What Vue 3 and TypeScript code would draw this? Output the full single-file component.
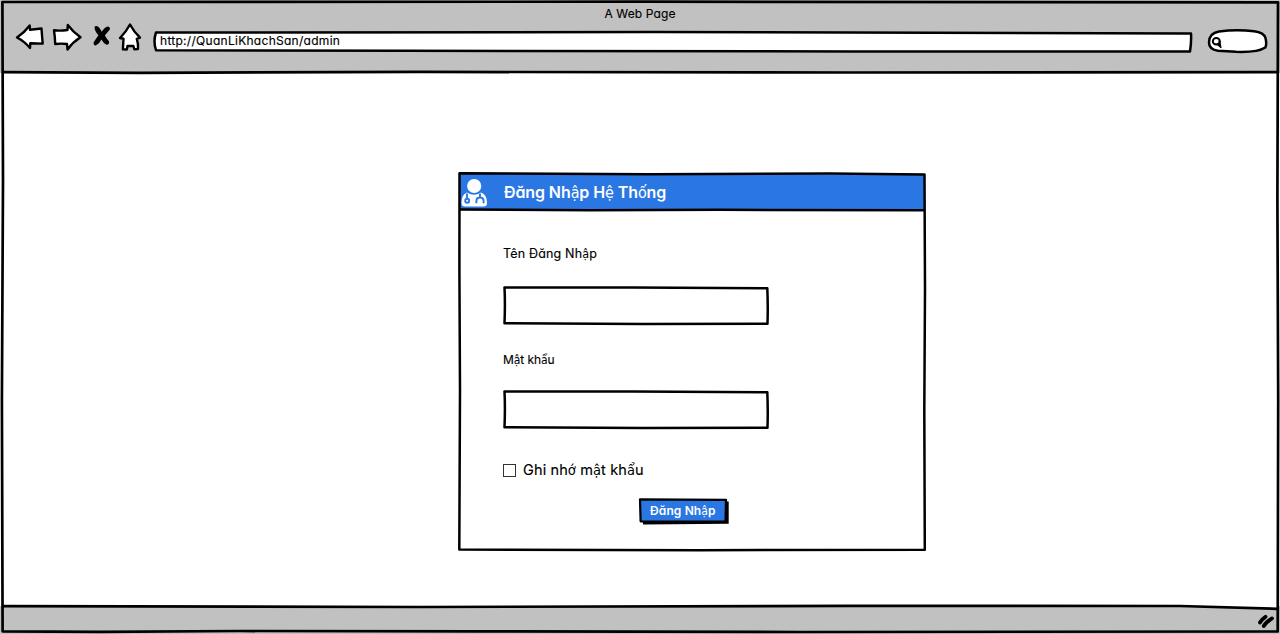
<script setup lang="ts">
import { ref } from 'vue'

interface Run { text: string; alt?: boolean }

// Splits text so that stacked Vietnamese vowels take the fallback face.
function runs(text: string): Run[] {
  return text
    .split(/([ậệốớẩ])/)
    .filter((part) => part.length > 0)
    .map((part) => ({ text: part, alt: /^[ậệốớẩ]$/.test(part) }))
}

const heading = runs('Đăng Nhập Hệ Thống')
const remember = runs('Ghi nhớ mật khẩu')
const submit = runs('Đăng Nhập')
const fields = [
  { id: 'user', type: 'text', label: runs('Tên Đăng Nhập') },
  { id: 'password', type: 'password', label: runs('Mật khẩu') },
]
const values = ref<string[]>(['', ''])
const checked = ref(false)
</script>

<template>
  <div class="browser">
    <header class="toolbar">
      <div class="page-title"><span class="t-title">A Web Page</span></div>
      <div class="controls">
        <svg class="nav" width="138" height="34" viewBox="10 20 138 34">
          <g fill="#fff" stroke="#000" stroke-width="2.4" stroke-linejoin="round">
            <path d="M17 37.5 Q24 33 29.7 25.5 L30 29.8 L41.5 28.5 Q42 36 42.7 43.6 L30.3 43.3 L30 48 Q24 41 17 37.5Z" />
            <path d="M54 30.3 Q60 31 67.5 30 L67.8 25 Q73 32 80.5 37.3 Q73 42 67.5 49.5 L67 44 Q61 43.2 55.2 44 Q55 37 54 30.3Z" />
            <path d="M130 24.5 Q134 32 140 37.7 L136.8 38.8 Q138.5 44 138 49 L134.3 49.3 L133.4 46 L127.5 46 L126.8 49.5 L122.9 49.2 L123.5 38.7 L120 38 Q126 32 130 24.5Z" />
          </g>
          <path d="M94.6 26.6 Q97 25 99.5 28 L101.8 31.8 Q104 27.5 107.5 26.4 Q110.6 26.8 109.8 29.5 L104.8 35.5 Q106.8 39 109 41.2 Q109.5 44.8 106.5 44.8 Q103.5 43.5 101.4 39.6 Q99.5 44 95.8 45.6 Q93 45.5 93.8 42 L98.4 35.3 Q94.3 31 94.6 26.6Z" fill="#000" />
        </svg>
        <div class="address">
          <svg class="sketch" viewBox="0 0 1040 24">
            <path d="M3 2.5 L500 2 L1038 3.5 Q1038.5 12 1037 21.5 L700 21.5 L250 20.7 L3 20.2 Q0 11 3 2.5Z" fill="#fff" stroke="#000" stroke-width="2.5" stroke-linejoin="round" />
          </svg>
          <span class="t-url">http://QuanLiKhachSan/admin</span>
        </div>
        <svg class="search" width="62" height="26" viewBox="1206 28 62 26">
          <path d="M1209 42.5 Q1209 33 1219 31.4 Q1237 29 1254 31.3 Q1264 32.5 1265.5 38 Q1267 45 1265.3 47.5 Q1258 52.5 1236 51.8 L1218 50.7 Q1209 49.5 1209 42.5Z" fill="#fff" stroke="#000" stroke-width="2.5" />
          <ellipse cx="1216.3" cy="41.3" rx="3.5" ry="3.3" fill="none" stroke="#000" stroke-width="2" />
          <path d="M1217.3 44 L1220.8 47.2 M1219.5 41.5 L1220.3 45.5" fill="none" stroke="#000" stroke-width="1.8" stroke-linecap="round" />
        </svg>
      </div>
    </header>

    <main class="viewport">
      <form class="dialog" @submit.prevent>
        <svg class="sketch" viewBox="458 172 468 380">
          <path d="M459.5 173.5 L924.5 174.5 L924.5 210 L459.5 210Z" fill="#2a77e4" />
          <g fill="none" stroke="#000" stroke-width="2.5" stroke-linejoin="round">
            <path d="M459.5 173.3 L650 174.2 L830 173.6 L924.5 174.4 L925 290 L924.3 410 L924.8 549.8 L700 550.2 L459.3 549.5 L460 390 L459.4 270Z" />
            <path d="M459.5 209.5 L590 210.3 L720 209.8 L924.5 210.2" />
          </g>
        </svg>
        <div class="dialog-head">
          <svg class="avatar" width="28" height="30" viewBox="461 178 28 30">
            <circle cx="474.2" cy="186" r="7.1" fill="#fff" />
            <path d="M467 192.5 Q474 197 481 192.5 Q487 194.5 487 203 Q487 206.5 483.5 206.5 H465 Q461.5 206.5 461.5 203 Q461.5 194.5 467 192.5Z" fill="#fff" />
            <path d="M467 193.5 V198.5 M480 193.5 V197 M476.4 203.2 V201 Q476.5 197.5 480 197.5 Q483.5 197.5 483.6 201 V203.2" fill="none" stroke="#2a77e4" stroke-width="1.9" />
            <circle cx="467.2" cy="200.7" r="2" fill="#fff" stroke="#2a77e4" stroke-width="1.9" />
          </svg>
          <h1 class="t-heading"><span v-for="(r, i) in heading" :key="i" :class="{ alt: r.alt }">{{ r.text }}</span></h1>
        </div>
        <div class="dialog-body">
          <div v-for="(f, n) in fields" :key="f.id" class="field">
            <label :for="f.id" :class="['t-label', f.id]"><span v-for="(r, i) in f.label" :key="i" :class="{ alt: r.alt }">{{ r.text }}</span></label>
            <div class="box">
              <svg class="sketch" viewBox="0 0 266 39">
                <path d="M1.5 1.4 L130 1.5 L264.3 2.2 Q265.1 20 264.5 37.7 L140 38 L1.5 37.3 Q2.3 18 1.5 1.4Z" fill="#fff" stroke="#000" stroke-width="2.5" stroke-linejoin="round" />
              </svg>
              <input :id="f.id" v-model="values[n]" :type="f.type" />
            </div>
          </div>
          <label class="remember">
            <input v-model="checked" type="checkbox" />
            <span class="t-remember"><span v-for="(r, i) in remember" :key="i" :class="{ alt: r.alt }">{{ r.text }}</span></span>
          </label>
          <button class="submit" type="submit">
            <svg class="sketch" viewBox="638 498 92 27">
              <path d="M643 502 L728.7 501.5 L728.7 523.7 L643 524.5Z" fill="#000" />
              <path d="M640 499.4 L726 499.8 L725.5 521.5 L640.6 521.3Z" fill="#2a77e4" stroke="#000" stroke-width="2.2" stroke-linejoin="round" />
            </svg>
            <span class="t-submit"><span v-for="(r, i) in submit" :key="i" :class="{ alt: r.alt }">{{ r.text }}</span></span>
          </button>
        </div>
      </form>
    </main>

    <footer class="status">
      <svg width="20" height="18" viewBox="1256 612 20 18">
        <path d="M1260 622.5 Q1262 619 1265.5 616.8 M1263.8 626 Q1266 622 1272 618.4" fill="none" stroke="#000" stroke-width="3.8" stroke-linecap="round" />
      </svg>
    </footer>

    <svg class="sketch frame" viewBox="0 0 1280 634">
      <path d="M2 605.5 L420 606.5 L850 605.6 L1180 606 L1278 608.5 L1278 600 H2Z" fill="#fff" />
      <g fill="none" stroke="#000" stroke-width="2.7" stroke-linejoin="round">
        <path d="M2.4 2 L640 1.7 L1278 2.3 L1277.4 200 L1278.2 400 L1277.7 631.5 L800 632 L480 631.4 L240 631 L100 631.8 L2.6 631.3 L1.9 400 L3 180Z" />
        <path d="M2.5 72.2 L140 72.8 L420 71.9 L850 72.5 L1278 72.1" />
        <path d="M2.5 606.2 L420 607 L850 605.8 L1180 606 L1278 608.8" />
      </g>
    </svg>
  </div>
</template>

<style>
body {
  margin: 0;
  overflow: hidden;
}
</style>

<style scoped>
.browser {
  position: relative;
  width: 1280px;
  height: 634px;
  display: grid;
  grid-template-rows: 73px 1fr 28px;
  background: #fff;
  color: #000;
  font-family: Inter, "Open Sans", sans-serif;
  font-feature-settings: "cv11" 1, "ss03" 1;
  -webkit-text-stroke: 0.15px currentColor;
  white-space: nowrap;
}
.sketch {
  position: absolute;
  inset: 0;
  width: 100%;
  height: 100%;
  overflow: visible;
  pointer-events: none;
}
.toolbar, .status {
  background: #c1c1c1;
}
.page-title {
  height: 20px;
  padding-top: 3px;
  box-sizing: border-box;
  text-align: center;
  line-height: 19px;
}
.controls {
  display: flex;
  align-items: flex-start;
  padding-left: 10px;
}
.address {
  position: relative;
  width: 1040px;
  height: 24px;
  margin: 10px 0 0 5px;
  padding-left: 7px;
  box-sizing: border-box;
  line-height: 19px;
}
.address .t-url {
  position: relative;
}
.search {
  margin: 8px 0 0 13px;
}
.t-title { font-size: 12px; letter-spacing: 0.12px; }
.t-url { font-size: 12px; letter-spacing: 0.28px; }
.viewport {
  display: flex;
  justify-content: flex-start;
  align-items: flex-start;
  padding: 99px 0 0 458px;
}
.dialog {
  position: relative;
  width: 468px;
  height: 380px;
}
.dialog-head {
  position: relative;
  height: 39px;
  display: flex;
  align-items: flex-start;
  padding: 6px 0 0 3px;
  box-sizing: border-box;
  color: #fff;
}
.t-heading {
  margin: 3px 0 0 15px;
  font-size: 16px;
  line-height: 22px;
  font-weight: 600;
  letter-spacing: -0.1px;
  -webkit-text-stroke: 0;
}
.dialog-body {
  position: relative;
  padding: 33px 0 0 45px;
}
.field {
  height: 104px;
  display: flex;
  flex-direction: column;
  align-items: flex-start;
}
.t-label {
  height: 20px;
  line-height: 20px;
  font-size: 12px;
  margin-bottom: 22px;
}
.t-label.user {
  font-size: 12.5px;
  letter-spacing: 0.17px;
}
.t-label.password {
  padding-top: 2px;
  margin-bottom: 20px;
  letter-spacing: -0.08px;
}
.box {
  position: relative;
  width: 266px;
  height: 39px;
}
.box input {
  position: relative;
  width: 100%;
  height: 100%;
  padding: 4px 8px;
  box-sizing: border-box;
  border: 0;
  background: transparent;
  outline: none;
}
.remember {
  display: flex;
  align-items: center;
  height: 22px;
  margin-top: 7px;
}
.remember input {
  appearance: none;
  width: 13px;
  height: 13px;
  margin: 0 7px 0 0;
  border: 1px solid #333;
  background: #fff;
}
.remember input:checked {
  background: #333;
}
.t-remember {
  font-size: 14.5px;
  line-height: 20px;
  letter-spacing: 0.12px;
}
.submit {
  position: relative;
  display: block;
  width: 92px;
  height: 27px;
  margin: 17px 0 0 135px;
  padding: 0 0 4px 12px;
  border: 0;
  background: none;
  color: #fff;
  font: inherit;
  text-align: left;
  line-height: 22px;
}
.submit span { position: relative; }
.t-submit {
  font-size: 12px;
  font-weight: 600;
  letter-spacing: 0.12px;
  -webkit-text-stroke: 0;
}
.alt {
  font-family: "DejaVu Sans Condensed", "Noto Sans", sans-serif;
  font-weight: 400;
  -webkit-text-stroke: 0;
}
.status {
  display: flex;
  justify-content: flex-end;
  align-items: flex-start;
  padding: 6px 4px 0 0;
}
</style>
